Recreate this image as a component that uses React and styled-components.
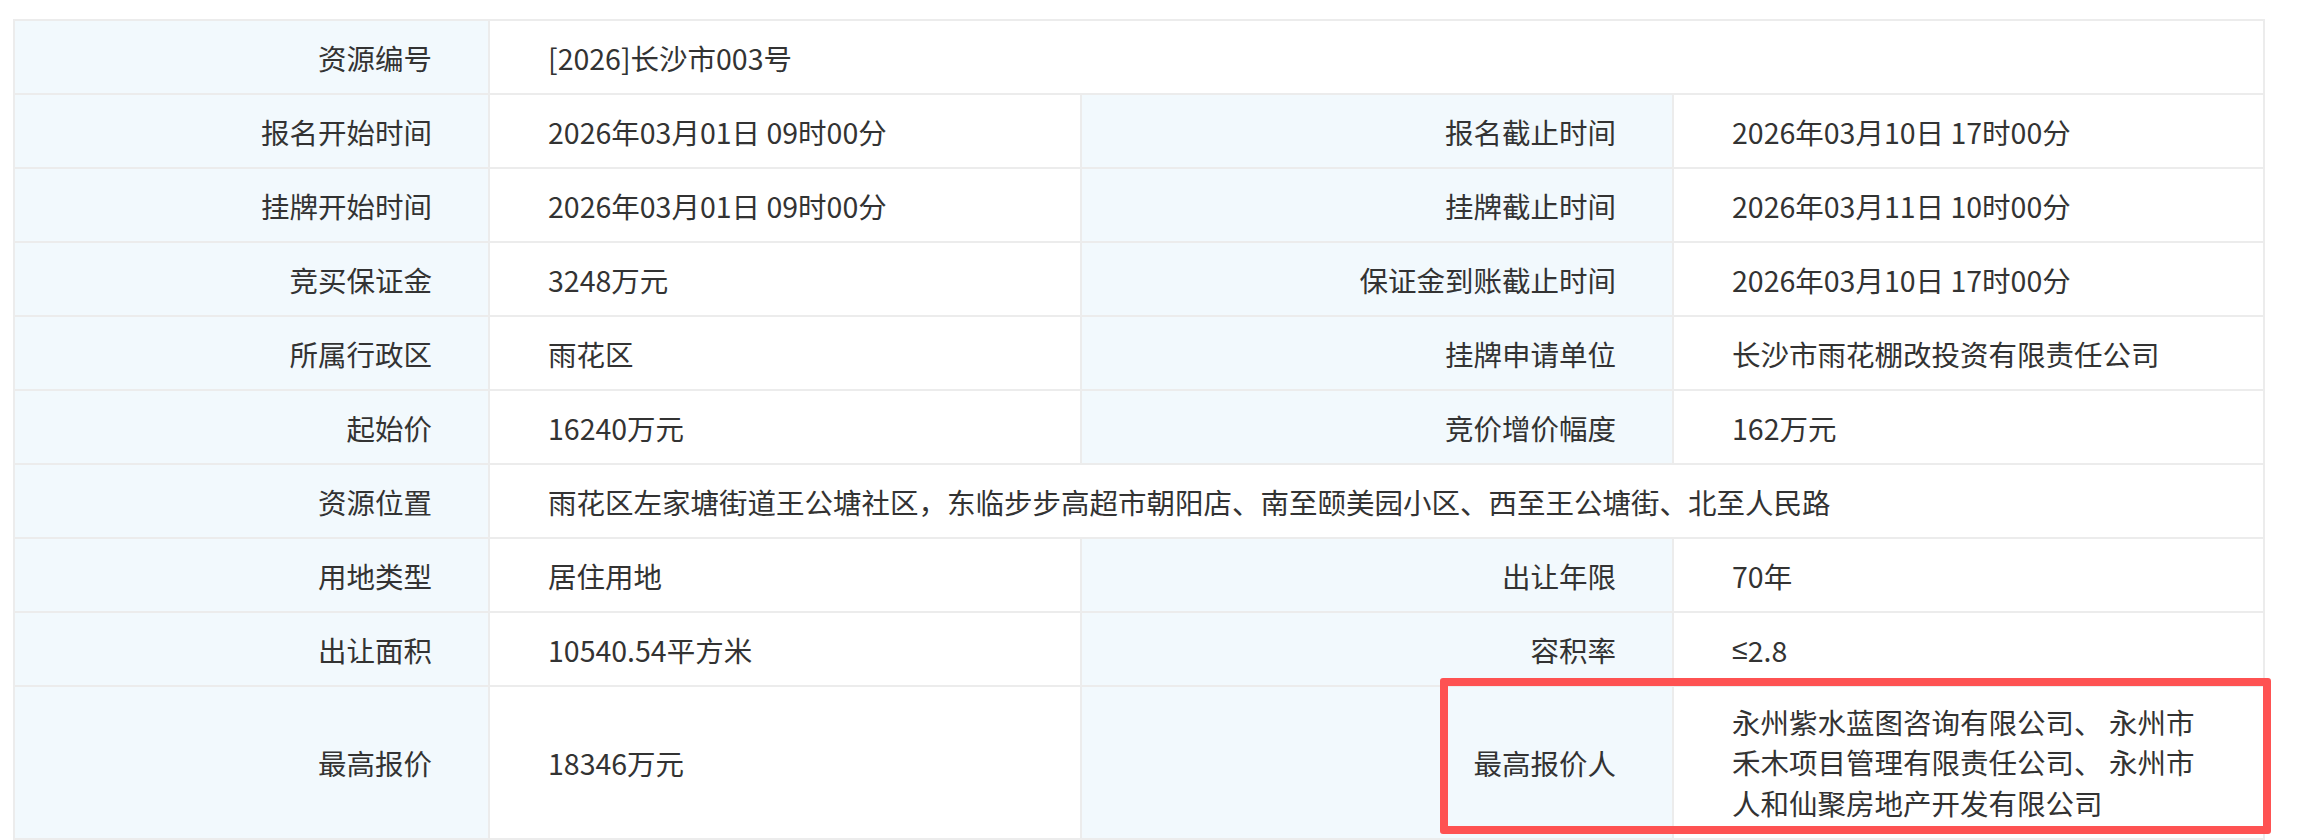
import React from "react";
import styled, { createGlobalStyle } from "styled-components";

const GlobalStyle = createGlobalStyle`
  body {
    margin: 0;
    background: #ffffff;
    font-family: "Noto Sans CJK SC", "Noto Sans", sans-serif;
  }
`;

const Page = styled.div`
  padding: 19px 0 0 13px;
`;

const Frame = styled.div`
  position: relative;
  width: 2252px;
`;

const Grid = styled.div`
  display: grid;
  grid-template-columns: 473px 590px 590px 589px;
  grid-auto-rows: minmax(72px, auto);
  gap: 2px;
  padding: 2px;
  background: #ececec;
`;

const Label = styled.div`
  display: flex;
  align-items: center;
  justify-content: flex-end;
  padding-right: 56px;
  background: #f2f9fd;
  color: #333333;
  font-size: 28.5px;
  min-height: ${(p) => (p.$tall ? "151px" : "72px")};
`;

const Value = styled.div`
  display: flex;
  align-items: center;
  padding: 0 58px;
  background: #ffffff;
  color: #333333;
  font-size: 28.5px;
  line-height: ${(p) => (p.$multi ? "40.5px" : "normal")};
  grid-column: ${(p) => (p.$span ? `span ${p.$span}` : "auto")};
`;

const MathSign = styled.span`
  font-family: "Liberation Sans", sans-serif;
`;

const Highlight = styled.div`
  position: absolute;
  left: 1427px;
  right: -6px;
  top: 659px;
  height: 156px;
  box-sizing: border-box;
  border: 8px solid #fe5252;
  border-radius: 3px;
  pointer-events: none;
`;

const rows = [
  [["资源编号", "[2026]长沙市003号"]],
  [
    ["报名开始时间", "2026年03月01日 09时00分"],
    ["报名截止时间", "2026年03月10日 17时00分"],
  ],
  [
    ["挂牌开始时间", "2026年03月01日 09时00分"],
    ["挂牌截止时间", "2026年03月11日 10时00分"],
  ],
  [
    ["竞买保证金", "3248万元"],
    ["保证金到账截止时间", "2026年03月10日 17时00分"],
  ],
  [
    ["所属行政区", "雨花区"],
    ["挂牌申请单位", "长沙市雨花棚改投资有限责任公司"],
  ],
  [
    ["起始价", "16240万元"],
    ["竞价增价幅度", "162万元"],
  ],
  [["资源位置", "雨花区左家塘街道王公塘社区，东临步步高超市朝阳店、南至颐美园小区、西至王公塘街、北至人民路"]],
  [
    ["用地类型", "居住用地"],
    ["出让年限", "70年"],
  ],
  [
    ["出让面积", "10540.54平方米"],
    ["容积率", <><MathSign>≤</MathSign>2.8</>],
  ],
];

export default function App() {
  return (
    <Page>
      <GlobalStyle />
      <Frame>
        <Grid>
          {rows.map((pairs) =>
            pairs.map(([label, value]) => (
              <React.Fragment key={label}>
                <Label>{label}</Label>
                <Value $span={pairs.length === 1 ? 3 : 0}>{value}</Value>
              </React.Fragment>
            ))
          )}
          <Label $tall>最高报价</Label>
          <Value>18346万元</Value>
          <Label $tall>最高报价人</Label>
          <Value $multi>
            <span>
              永州紫水蓝图咨询有限公司、 永州市禾木项目管理有限责任公司、 永州市人和仙聚房地产开发有限公司
            </span>
          </Value>
        </Grid>
        <Highlight />
      </Frame>
    </Page>
  );
}
